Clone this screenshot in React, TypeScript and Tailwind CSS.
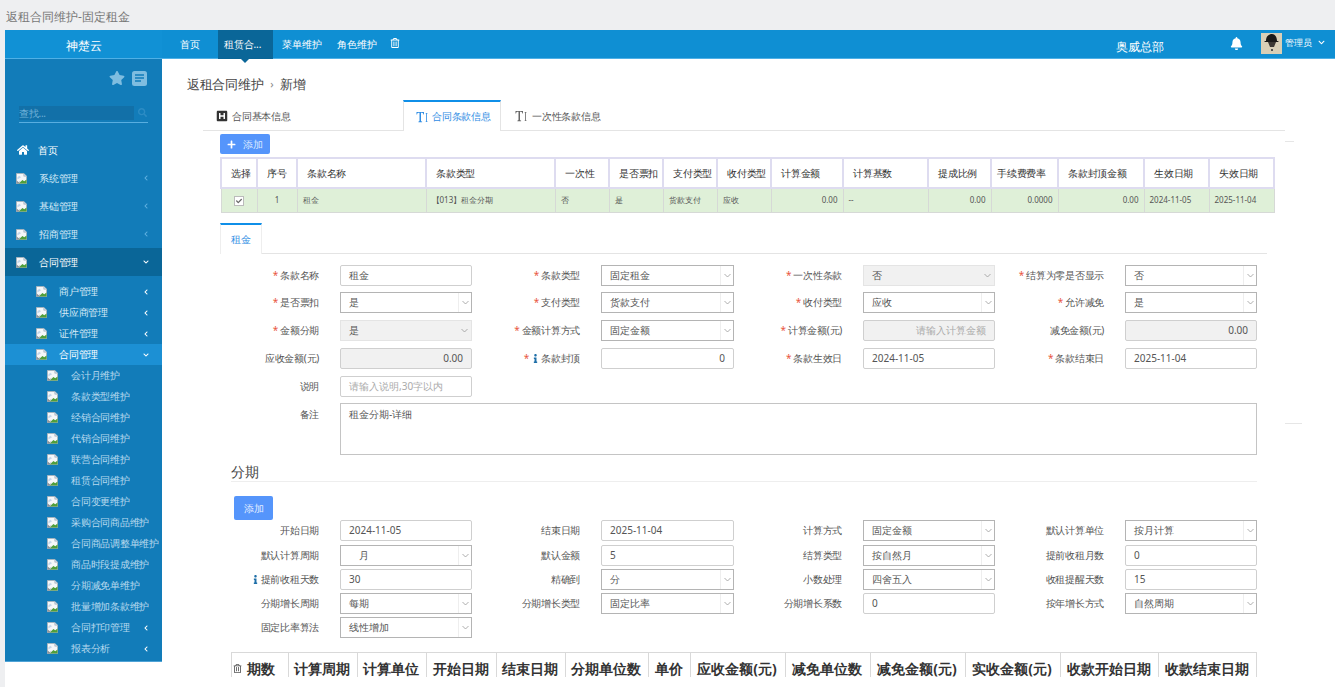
import { FaStar, FaHome, FaBell, FaPlus, FaRegTrashAlt, FaHSquare, FaInfo, FaChevronLeft, FaChevronDown, FaCheck, FaSearch } from "react-icons/fa";

function Broken() {
  return (
    <svg width="11" height="11" viewBox="0 0 12 12" className="shrink-0">
      <path d="M0.5 0.5H8.5L11.5 3.5V11.5H0.5Z" fill="#f5f7f9" stroke="#a9b3bb" strokeWidth="1" />
      <path d="M8.5 0.5V3.5H11.5" fill="#c9d6e2" stroke="#a9b3bb" strokeWidth="0.7" />
      <path d="M3 11.5L7 7.5L9 9L11.5 7V11.5Z" fill="#4f9e3a" />
      <path d="M0.5 11.5V8L3 10L5 8.5L3 11.5Z" fill="#8b9299" />
      <path d="M1.5 5 L3.5 3 L5.5 4.5 L1.5 7Z" fill="#c3d6ea" />
    </svg>
  );
}

function TIcon({ className }: { className?: string }) {
  return (
    <svg width="12" height="12" viewBox="0 0 12 12" className={className}>
      <path fill="currentColor" d="M0.5 1H8V3.6H7.4C7.3 2.5 6.9 1.8 6 1.8H5V9.6C5 10.3 5.4 10.6 6.1 10.6V11.2H2.4V10.6C3.1 10.6 3.5 10.3 3.5 9.6V1.8H2.5C1.6 1.8 1.2 2.5 1.1 3.6H0.5Z" />
      <path fill="currentColor" d="M9.6 2H11.6V2.5H11V10.5H11.6V11H9.6V10.5H10.2V2.5H9.6Z" />
    </svg>
  );
}

const topMenu = ["系统管理", "基础管理", "招商管理"];
const sub1 = ["商户管理", "供应商管理", "证件管理"];
const sub2 = ["会计月维护", "条款类型维护", "经销合同维护", "代销合同维护", "联营合同维护", "租赁合同维护", "合同变更维护", "采购合同商品维护", "合同商品调整单维护", "商品时段提成维护", "分期减免单维护", "批量增加条款维护"];

function Sidebar() {
  return (
    <aside className="w-[157px] h-[603px] shrink-0 bg-[#127cb9] border-b border-[#4fa3d6] text-[10px] tracking-[-0.25px] text-[#d6ebf7]">
      <div className="flex justify-end items-center gap-[7px] h-[38px] pr-[15px]">
        <FaStar className="text-[16px] text-[#7fbde0]" />
        <svg width="15" height="15" viewBox="0 0 15 15">
          <rect width="15" height="15" rx="2.5" fill="#7fbde0" />
          <path d="M3 4H12M3 7H12M3 10H9" stroke="#127cb9" strokeWidth="1.3" />
        </svg>
      </div>
      <div className="mx-[14px] mt-[9px] h-[17px] w-[129px] border-b border-[#58aee0] flex items-start">
        <div className="w-[115px] h-[14px] bg-[#1270a8] text-[#6fb0d8] leading-[14px]">查找...</div>
        <FaSearch className="ml-[4px] mt-[2px] text-[9px] text-[#2d8cc4]" />
      </div>
      <div className="mt-[13px] flex items-center h-[28px] pl-[12px] text-white">
        <FaHome className="text-[12px] w-[12px]" />
        <span className="ml-[9px]">首页</span>
      </div>
      {topMenu.map((t) => (
        <div key={t} className="flex items-center h-[28px] pl-[11px] pr-[13px]">
          <Broken />
          <span className="ml-[12px] flex-1">{t}</span>
          <FaChevronLeft className="text-[6px] text-[#5fb0e0]" />
        </div>
      ))}
      <div className="flex items-center h-[28px] pl-[11px] pr-[13px] bg-[#0a6698] text-white">
        <Broken />
        <span className="ml-[12px] flex-1">合同管理</span>
        <FaChevronDown className="text-[6px]" />
      </div>
      <div className="pt-[5px]">
        {sub1.map((t) => (
          <div key={t} className="flex items-center h-[21px] pl-[31px] pr-[13px]">
            <Broken />
            <span className="ml-[12px] flex-1">{t}</span>
            <FaChevronLeft className="text-[6px] text-white" />
          </div>
        ))}
        <div className="flex items-center h-[21px] pl-[31px] pr-[13px] bg-[#1c90d4] text-white">
          <Broken />
          <span className="ml-[12px] flex-1">合同管理</span>
          <FaChevronDown className="text-[6px]" />
        </div>
        {sub2.map((t) => (
          <div key={t} className="flex items-center h-[21px] pl-[42px] whitespace-nowrap text-[#b6d9ee]">
            <Broken />
            <span className="ml-[13px]">{t}</span>
          </div>
        ))}
        {["合同打印管理", "报表分析"].map((t) => (
          <div key={t} className="flex items-center h-[21px] pl-[42px] pr-[13px] text-[#b6d9ee]">
            <Broken />
            <span className="ml-[13px] flex-1">{t}</span>
            <FaChevronLeft className="text-[6px] text-white" />
          </div>
        ))}
      </div>
    </aside>
  );
}

function Label({ text, req, info, top }: { text: string; req?: boolean; info?: boolean; top?: boolean }) {
  return (
    <div className={`flex justify-end pr-[21px] text-[10px] tracking-[-0.25px] text-[#555] whitespace-nowrap ${top ? "items-start pt-[4px]" : "items-center"}`}>
      {req && <span className="text-[#e9573f] mr-[2px] text-[10px]">*</span>}
      {info && <FaInfo className="text-[#1f6fa8] text-[9px] mr-[1px]" />}
      <span>{text}</span>
    </div>
  );
}

function Input({ value, right, disabled, ph }: { value?: string; right?: boolean; disabled?: boolean; ph?: string }) {
  return (
    <div className={`h-[21px] border border-[#cfcfcf] rounded-[2px] px-[8px] flex items-center text-[10px] ${right ? "justify-end" : ""} ${disabled ? "bg-[#f1f1f1]" : "bg-white"} ${ph ? "text-[#aaa]" : "text-[#555]"}`}>
      {value ?? ph}
    </div>
  );
}

function Select({ value, disabled, indent }: { value: string; disabled?: boolean; indent?: boolean }) {
  return (
    <div className={`h-[21px] border flex items-center text-[10px] text-[#555] ${disabled ? "bg-[#f1f1f1] border-[#e4e4e4]" : "bg-white border-[#b4b4b4]"}`}>
      <span className={`flex-1 ${indent ? "pl-[18px]" : "pl-[8px]"}`}>{value}</span>
      <span className={`w-[13px] h-full flex items-center justify-center ${disabled ? "" : "border-l border-[#eeeeee]"}`}>
        <svg width="7" height="5" viewBox="0 0 7 5"><path d="M0.5 1L3.5 4L6.5 1" fill="none" stroke="#9a9a9a" strokeWidth="0.8" /></svg>
      </span>
    </div>
  );
}

const gridCols = "grid grid-cols-[120px_132px_129px_133px_129px_132px_130px_132px]";

const headers: [string, number][] = [
  ["选择", 36], ["序号", 40], ["条款名称", 129], ["条款类型", 129], ["一次性", 54], ["是否票扣", 54], ["支付类型", 54], ["收付类型", 54],
  ["计算金额", 72], ["计算基数", 85], ["提成比例", 63], ["手续费费率", 67], ["条款封顶金额", 86], ["生效日期", 65], ["失效日期", 65],
];
const row = ["", "1", "租金", "【013】租金分期", "否", "是", "货款支付", "应收", "0.00", "--", "0.00", "0.0000", "0.00", "2024-11-05", "2025-11-04"];
const rightIdx = [8, 10, 11, 12];

const installHeads: [string, number][] = [
  ["期数", 57], ["计算周期", 69], ["计算单位", 69], ["开始日期", 70], ["结束日期", 69], ["分期单位数", 83], ["单价", 42], ["应收金额(元)", 95],
  ["减免单位数", 85], ["减免金额(元)", 95], ["实收金额(元)", 95], ["收款开始日期", 98], ["收款结束日期", 99],
];

export default function App() {
  return (
    <div className="w-[1335px] h-[687px] overflow-hidden bg-[#eeeff1] font-['Open_Sans','Noto_Sans_CJK_SC',sans-serif]">
      <div className="h-[30px] pl-[6px] pt-[7px] text-[12px] leading-[20px] text-[#777]">返租合同维护-固定租金</div>
      <div className="ml-[5px] h-[657px] bg-white">
        <header className="h-[29px] flex bg-[#0f8fd3] border-b border-[#4fb0e6] text-white relative">
          <div className="w-[157px] text-center text-[12px] leading-[32px] bg-[#1191d5]">神楚云</div>
          <nav className="flex pl-[10px] text-[10px] tracking-[-0.1px] leading-[28px]">
            <div className="px-[8px] mr-[10px]">首页</div>
            <div className="w-[55px] pl-[6px] bg-[#0a6698] relative -mb-px whitespace-nowrap">
              租赁合...
              <span className="absolute left-1/2 -translate-x-1/2 top-full w-0 h-0 border-x-[4px] border-x-transparent border-t-[4px] border-t-[#0a6698]" />
            </div>
            <div className="px-[9px] mr-[-2px]">菜单维护</div>
            <div className="px-[9px]">角色维护</div>
            <div className="pl-[4px] flex items-center pb-[2px]"><FaRegTrashAlt className="text-[10px]" /></div>
          </nav>
          <div className="flex-1" />
          <div className="w-[48px] text-[12px] leading-[34px] whitespace-nowrap mr-[66px]">奥威总部</div>
          <div className="flex items-center mr-[18px] pb-[1px]"><FaBell className="text-[13px]" /></div>
          <svg width="21" height="21" viewBox="0 0 21 21" className="mt-[3px] mr-[3px]">
            <rect width="21" height="21" fill="#d9cfb6" />
            <path d="M5 8C5 3 8 1 11 1C14 1 16 4 16 8C18 8 18 9 17 9H4C3 9 3 8 5 8Z" fill="#1c1a18" />
            <path d="M7 9H15L13 14H9Z" fill="#3d3833" />
            <rect x="10" y="16" width="2" height="2" fill="#555" />
          </svg>
          <div className="text-[9px] leading-[26px] whitespace-nowrap w-[27px]">管理员</div>
          <div className="flex items-center ml-[6px] pb-[3px] mr-[10px]"><FaChevronDown className="text-[7px]" /></div>
        </header>

        <div className="flex">
          <Sidebar />
          <main className="flex-1 min-w-0 relative">
            <div className="h-[41px] pl-[25px] pt-[10px] flex items-center text-[13px] tracking-[-0.3px] text-[#444]">
              <span>返租合同维护</span>
              <span className="mx-[7px] text-[11px] text-[#888]">›</span>
              <span>新增</span>
            </div>

            {/* tabs */}
            <div className="ml-[41px] w-[1082px] h-[31px] flex border-b border-[#e4e4e4] text-[10px] tracking-[-0.25px] text-[#555]">
              <div className="w-[200px] flex items-center pl-[13px] pt-[2px]">
                <FaHSquare className="text-[12px] text-[#333]" />
                <span className="ml-[4px]">合同基本信息</span>
              </div>
              <div className="w-[98px] -mb-px bg-white border-t-2 border-t-[#0f8fe8] border-x border-x-[#e4e4e4] flex items-center pl-[12px] text-[#2f8de4]">
                <TIcon />
                <span className="ml-[4px]">合同条款信息</span>
              </div>
              <div className="flex items-center pl-[14px] pt-[2px]">
                <TIcon className="text-[#666]" />
                <span className="ml-[5px]">一次性条款信息</span>
              </div>
            </div>
            <div className="absolute left-[1123px] top-[82px] w-[9px] h-px bg-[#e6e6e6]" />
            <div className="absolute left-[1123px] top-[364px] w-[17px] h-px bg-[#e6e6e6]" />

            <div className="ml-[58px] w-[1047px]">
              <button className="mt-[3px] w-[50px] h-[20px] flex items-center justify-center gap-[7px] rounded-[2px] bg-[#5595fb] text-[10px] tracking-[-0.25px] text-[#dce9ff]">
                <FaPlus className="text-[9px] text-white" />
                添加
              </button>

              <table className="mt-[3px] table-fixed w-[1054px] border-collapse text-[10px] text-[#444]">
                <colgroup>
                  {headers.map(([h, w]) => <col key={h} style={{ width: w }} />)}
                </colgroup>
                <thead>
                  <tr className="h-[30px]">
                    {headers.map(([h], i) => (
                      <th key={h} className={`border-2 border-[#dedcf0] font-medium tracking-[-0.25px] whitespace-nowrap text-[#333] text-left ${i === 11 ? "pl-[5px]" : "pl-[9px]"}`}>{h}</th>
                    ))}
                  </tr>
                </thead>
                <tbody>
                  <tr className="h-[24px] bg-[#dff0d8] text-[8px] text-[#555]">
                    {row.map((c, i) => (
                      <td key={i} className={`border border-[#d6d9d6] whitespace-nowrap px-[5px] ${rightIdx.includes(i) ? "text-right" : i < 2 ? "text-center" : "text-left"}`}>
                        {i === 0 ? (
                          <span className="inline-flex w-[10px] h-[10px] border border-[#bbb] bg-white items-center justify-center align-middle">
                            <FaCheck className="text-[6px] text-[#666]" />
                          </span>
                        ) : c}
                      </td>
                    ))}
                  </tr>
                </tbody>
              </table>

              <div className="mt-[10px] w-[1047px] h-[31px] border-b border-[#e4e4e4]">
                <div className="w-[42px] h-[31px] bg-white border-t-2 border-t-[#0f8fe8] border-x border-x-[#eeeeee] flex items-center justify-center text-[10px] text-[#2f8de4]">租金</div>
              </div>

              <div className={`${gridCols} mt-[11px] gap-y-[6.75px]`}>
                <Label text="条款名称" req /><Input value="租金" />
                <Label text="条款类型" req /><Select value="固定租金" />
                <Label text="一次性条款" req /><Select value="否" disabled />
                <Label text="结算为零是否显示" req /><Select value="否" />

                <Label text="是否票扣" req /><Select value="是" />
                <Label text="支付类型" req /><Select value="货款支付" />
                <Label text="收付类型" req /><Select value="应收" />
                <Label text="允许减免" req /><Select value="是" />

                <Label text="金额分期" req /><Select value="是" disabled />
                <Label text="金额计算方式" req /><Select value="固定金额" />
                <Label text="计算金额(元)" req /><Input ph="请输入计算金额" right disabled />
                <Label text="减免金额(元)" /><Input value="0.00" right disabled />

                <Label text="应收金额(元)" /><Input value="0.00" right disabled />
                <Label text="条款封顶" req info /><Input value="0" right />
                <Label text="条款生效日" req /><Input value="2024-11-05" />
                <Label text="条款结束日" req /><Input value="2025-11-04" />

                <Label text="说明" /><Input ph="请输入说明,30字以内" />
                <div className="col-span-6" />

                <Label text="备注" top />
                <div className="col-span-7 h-[52px] border border-[#c4c4c4] px-[8px] pt-[3px] text-[10px] text-[#555]">租金分期-详细</div>
              </div>

              <h3 className="mt-[7px] ml-[11px] w-[1026px] h-[20px] border-b border-[#eeeeee] text-[14px] leading-[20px] font-normal text-[#444]">分期</h3>

              <button className="mt-[14px] ml-[14px] block w-[39px] h-[24px] rounded-[2px] bg-[#5595fb] text-[10px] tracking-[-0.25px] text-[#e3edff]">添加</button>

              <div className={`${gridCols} gap-y-[3.3px]`}>
                <Label text="开始日期" /><Input value="2024-11-05" />
                <Label text="结束日期" /><Input value="2025-11-04" />
                <Label text="计算方式" /><Select value="固定金额" />
                <Label text="默认计算单位" /><Select value="按月计算" />

                <Label text="默认计算周期" /><Select value="月" indent />
                <Label text="默认金额" /><Input value="5" />
                <Label text="结算类型" /><Select value="按自然月" />
                <Label text="提前收租月数" /><Input value="0" />

                <Label text="提前收租天数" info /><Input value="30" />
                <Label text="精确到" /><Select value="分" />
                <Label text="小数处理" /><Select value="四舍五入" />
                <Label text="收租提醒天数" /><Input value="15" />

                <Label text="分期增长周期" /><Select value="每期" />
                <Label text="分期增长类型" /><Select value="固定比率" />
                <Label text="分期增长系数" /><Input value="0" />
                <Label text="按年增长方式" /><Select value="自然周期" />

                <Label text="固定比率算法" /><Select value="线性增加" />
              </div>

              <div className="mt-[14px] ml-[11px] w-[1026px] h-[25px] border-t border-[#d9d9d9] flex text-[14px] font-bold text-[#333]">
                {installHeads.map(([h, w], i) => (
                  <div key={h} style={{ width: w }} className={`shrink-0 border-l border-[#d9d9d9] flex items-center whitespace-nowrap pt-[7px] ${i === 0 ? "justify-start pl-px" : "justify-center pr-[2px]"} ${i === installHeads.length - 1 ? "border-r" : ""}`}>
                    {i === 0 && <FaRegTrashAlt className="text-[9px] font-normal text-[#555] mr-[5px]" />}
                    {h}
                  </div>
                ))}
              </div>
            </div>
          </main>
        </div>
      </div>
    </div>
  );
}
